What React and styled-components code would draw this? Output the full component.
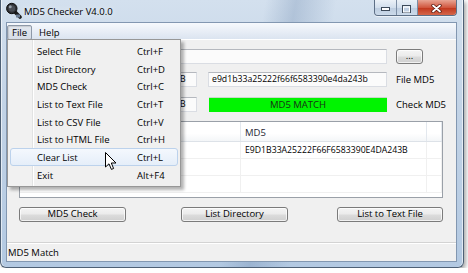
import React from 'react'
import styled, { createGlobalStyle } from 'styled-components'

const FONT = `"Segoe UI", "Open Sans", "Liberation Sans", sans-serif`;

const GlobalStyle = createGlobalStyle`
   html, body{
      margin: 0;
      padding: 0;
      background: #fff;
   }
   body{
      font-family: ${FONT};
      font-size: 9.5px;
      color: #000;
   }
`;

const Window = styled.div`
   position: relative;
   width: 464px;
   height: 268px;
   box-sizing: border-box;
   display: flex;
   flex-direction: column;
   padding: 0 6px 5px 5px;
   border: 1px solid #4e6075;
   border-top: none;
   border-radius: 0 0 6px 6px;
   background:
      linear-gradient(100deg, transparent 52%, rgba(95,125,165,0.28) 58%, transparent 66%),
      linear-gradient(to bottom, #d3e0ee 0%, #c2d3e6 40%, #b3c9e2 100%);
   box-shadow: 2px 2px 4px rgba(0,0,0,0.35), inset 1px 0 0 rgba(255,255,255,0.6), inset -1px 0 0 rgba(255,255,255,0.6);
`;

const TitleBar = styled.div`
   height: 22px;
   display: flex;
   align-items: flex-start;

   svg{
      margin: 2px 0 0 -1px;
      flex: none;
   }
`;

const Title = styled.div`
   margin: 5px 0 0 2px;
   font-size: 9.5px;
   line-height: 13px;
   color: #000;
   text-shadow: 0 0 6px rgba(255,255,255,0.9);
`;

const Controls = styled.div`
   margin-left: auto;
   display: flex;
   height: 15px;
   border: 1px solid #5d6f86;
   border-top: none;
   border-radius: 0 0 4px 4px;
   overflow: hidden;
   box-shadow: 0 1px 0 rgba(255,255,255,0.6);
`;

const CtrlButton = styled.div`
   width: ${p => p.$w}px;
   display: flex;
   align-items: center;
   justify-content: center;
   border-left: ${p => p.$first ? 'none' : '1px solid #7c8ea5'};
   background: ${p => p.$close
      ? 'linear-gradient(to bottom, #e8a493 0%, #d1573f 50%, #c2391f 55%, #d4664a 100%)'
      : 'linear-gradient(to bottom, rgba(255,255,255,0.55) 0%, rgba(210,222,236,0.5) 50%, rgba(170,188,212,0.5) 55%, rgba(200,215,232,0.6) 100%)'};
`;

const Client = styled.div`
   flex: 1;
   display: flex;
   flex-direction: column;
   border: 1px solid #8297b1;
   background: #f0f0f0;
   min-height: 0;
`;

const MenuBar = styled.div`
   height: 16px;
   display: flex;
   align-items: flex-start;
   border-bottom: 1px solid #fff;
   background: linear-gradient(to bottom, #f6f9fd 0%, #e6ecf5 60%, #dbe4f0 100%);
`;

const MenuTitle = styled.div`
   height: 13px;
   margin-top: 2px;
   margin-left: ${p => p.$ml || 0}px;
   padding: 0 4px;
   line-height: 13px;
   border: 1px solid ${p => p.$open ? '#8e99a8' : 'transparent'};
   border-radius: 2px;
   background: ${p => p.$open ? 'linear-gradient(to bottom, #e3e8ef, #d6dde7)' : 'transparent'};
   box-shadow: ${p => p.$open ? 'inset 1px 1px 1px rgba(0,0,0,0.12)' : 'none'};
`;

const Body = styled.div`
   flex: 1;
   display: flex;
   flex-direction: column;
   padding: 9px 0 0 12px;
`;

const Row = styled.div`
   display: flex;
   align-items: center;
   height: 15px;
   margin-top: ${p => p.$mt || 0}px;
`;

const TextBox = styled.div`
   width: ${p => p.$w}px;
   height: 15px;
   box-sizing: border-box;
   margin-left: ${p => p.$ml || 0}px;
   padding: 0 ${p => p.$right ? 12 : 3}px 0 3px;
   border: 1px solid #dadde3;
   border-top-color: #b5b8be;
   background: #fbfbfb;
   font-size: ${p => p.$hash ? 8.7 : 9.5}px;
   line-height: 13px;
   white-space: nowrap;
   overflow: hidden;
   text-align: ${p => p.$right ? 'right' : 'left'};
`;

const MatchBar = styled.div`
   width: 178px;
   height: 14px;
   margin-left: 12px;
   background: #00f400;
   border-top: 1px solid #c9d8c9;
   color: #163016;
   text-align: center;
   line-height: 13px;
`;

const FieldLabel = styled.div`
   margin-left: ${p => p.$ml}px;
   white-space: nowrap;
`;

const WinButton = styled.div`
   width: ${p => p.$w}px;
   height: 15px;
   box-sizing: border-box;
   margin-left: ${p => p.$ml || 0}px;
   border: 1px solid #7b7b7b;
   border-radius: 3px;
   background: linear-gradient(to bottom, #f4f4f4 0%, #ebebeb 48%, #dcdcdc 52%, #cfcfcf 100%);
   box-shadow: inset 0 0 0 1px rgba(255,255,255,0.7);
   text-align: center;
   line-height: 12px;
   white-space: nowrap;
`;

const ListView = styled.div`
   width: 424px;
   height: 77px;
   margin-top: 9px;
   box-sizing: border-box;
   border: 1px solid #9aa0a8;
   background: #fff;
   display: flex;
   flex-direction: column;
   overflow: hidden;
`;

const ListRow = styled.div`
   display: grid;
   grid-template-columns: 221px 186px 1fr;
   height: ${p => p.$head ? 19 : 16}px;
   flex: none;
   border-bottom: 1px solid ${p => p.$head ? '#dde2e8' : '#f0f0f0'};
   background: ${p => p.$head ? 'linear-gradient(to bottom, #fff 0%, #fff 60%, #f4f6f8 100%)' : '#fff'};
`;

const Cell = styled.div`
   padding-left: 4px;
   line-height: ${p => p.$head ? 21 : 16}px;
   border-right: 1px solid ${p => p.$head ? '#e3e8ee' : '#f0f0f0'};
   white-space: nowrap;
   overflow: hidden;
   font-size: ${p => p.$hash ? 8.7 : 9.5}px;
   color: ${p => p.$head ? '#1e2733' : '#000'};
`;

const Actions = styled.div`
   display: flex;
   margin-top: 9px;
`;

const StatusBar = styled.div`
   height: 18px;
   border-top: 1px solid #d3d3d3;
   padding-left: 1px;
   line-height: 20px;
   background: #f0f0f0;
   box-shadow: inset 0 1px 0 #fff;
`;

const DropMenu = styled.div`
   position: absolute;
   left: 6px;
   top: 39px;
   width: 174px;
   box-sizing: border-box;
   padding: 2px;
   border: 1px solid #979797;
   background: linear-gradient(to right, #f1f1f1 0, #f1f1f1 24px, #e2e3e3 24px, #e2e3e3 25px, #fff 25px, #fff 26px, #f0f0f0 26px);
   box-shadow: 3px 3px 3px rgba(0,0,0,0.3);
`;

const MenuItem = styled.div`
   display: grid;
   grid-template-columns: 100px auto;
   height: 17.7px;
   box-sizing: border-box;
   padding-left: 26px;
   line-height: 17px;
   border: 1px solid ${p => p.$hot ? '#bcd2ec' : 'transparent'};
   border-radius: 3px;
   background: ${p => p.$hot ? 'linear-gradient(to bottom, #f4f8fd, #e5eef9)' : 'transparent'};
   white-space: nowrap;
`;

const Pointer = styled.svg`
   position: absolute;
   left: 103.5px;
   top: 151.5px;
`;

const AppIcon = () => (
   <svg width="17" height="17" viewBox="0 0 17 17">
      <line x1="10" y1="10" x2="15" y2="15" stroke="#1b1b1b" strokeWidth="3.6" strokeLinecap="round" />
      <circle cx="6.8" cy="6.5" r="5.2" fill="#2d2f33" stroke="#0c0c0c" strokeWidth="1" />
      <circle cx="6.8" cy="6.5" r="3.3" fill="#4a4e55" />
      <circle cx="5.2" cy="4.8" r="1.5" fill="#9aa3ad" />
      <rect x="11" y="12.5" width="4" height="3" rx="0.6" fill="#6d7f96" />
   </svg>
);

const menuItems = [
   ['Select File', 'Ctrl+F'],
   ['List Directory', 'Ctrl+D'],
   ['MD5 Check', 'Ctrl+C'],
   ['List to Text File', 'Ctrl+T'],
   ['List to CSV File', 'Ctrl+V'],
   ['List to HTML File', 'Ctrl+H'],
   ['Clear List', 'Ctrl+L'],
   ['Exit', 'Alt+F4'],
];

const HASH = 'E9D1B33A25222F66F6583390E4DA243B';

const App = () => {
   return (
      <>
         <GlobalStyle />
         <Window>
            <TitleBar>
               <AppIcon />
               <Title>MD5 Checker V4.0.0</Title>
               <Controls>
                  <CtrlButton $w={21} $first>
                     <svg width="9" height="4" viewBox="0 0 9 4">
                        <rect x="0.5" y="0.5" width="8" height="3" fill="#fff" stroke="#3d4a5a" strokeWidth="1" />
                     </svg>
                  </CtrlButton>
                  <CtrlButton $w={20}>
                     <svg width="9" height="8" viewBox="0 0 9 8">
                        <rect x="0.5" y="0.5" width="8" height="7" fill="none" stroke="#3d4a5a" strokeWidth="1" />
                        <rect x="1.5" y="2" width="6" height="5" fill="none" stroke="#fff" strokeWidth="1" />
                     </svg>
                  </CtrlButton>
                  <CtrlButton $w={38} $close>
                     <svg width="11" height="9" viewBox="0 0 11 9">
                        <path d="M2 1.5 L9 7.5 M9 1.5 L2 7.5" stroke="#5a1a10" strokeWidth="3.4" strokeLinecap="round" />
                        <path d="M2 1.5 L9 7.5 M9 1.5 L2 7.5" stroke="#fff" strokeWidth="1.8" strokeLinecap="round" />
                     </svg>
                  </CtrlButton>
               </Controls>
            </TitleBar>
            <Client>
               <MenuBar>
                  <MenuTitle $open>File</MenuTitle>
                  <MenuTitle $ml={2}>Help</MenuTitle>
               </MenuBar>
               <Body>
                  <Row>
                     <TextBox $w={368}>C:\setup.exe</TextBox>
                     <WinButton $w={27} $ml={9}>...</WinButton>
                  </Row>
                  <Row $mt={8}>
                     <TextBox $w={178} $right $hash>{HASH}</TextBox>
                     <TextBox $w={179} $ml={11} $hash>{HASH.toLowerCase()}</TextBox>
                     <FieldLabel $ml={9}>File MD5</FieldLabel>
                  </Row>
                  <Row $mt={10}>
                     <TextBox $w={178} $right $hash>{HASH}</TextBox>
                     <MatchBar>MD5 MATCH</MatchBar>
                     <FieldLabel $ml={9}>Check MD5</FieldLabel>
                  </Row>
                  <ListView>
                     <ListRow $head>
                        <Cell $head>File</Cell>
                        <Cell $head>MD5</Cell>
                        <Cell $head />
                     </ListRow>
                     <ListRow>
                        <Cell>setup.exe</Cell>
                        <Cell $hash>{HASH}</Cell>
                        <Cell />
                     </ListRow>
                     <ListRow>
                        <Cell /><Cell /><Cell />
                     </ListRow>
                     <ListRow>
                        <Cell /><Cell /><Cell />
                     </ListRow>
                  </ListView>
                  <Actions>
                     <WinButton $w={107}>MD5 Check</WinButton>
                     <WinButton $w={107} $ml={55}>List Directory</WinButton>
                     <WinButton $w={106} $ml={49}>List to Text File</WinButton>
                  </Actions>
               </Body>
               <StatusBar>MD5 Match</StatusBar>
            </Client>

            <DropMenu>
               {menuItems.map(([label, key]) => (
                  <MenuItem key={label} $hot={label === 'Clear List'}>
                     <span>{label}</span>
                     <span>{key}</span>
                  </MenuItem>
               ))}
            </DropMenu>

            <Pointer width="12" height="19" viewBox="0 0 12 19">
               <path d="M0.5 0.5 L0.5 15 L4 11.8 L6.4 17.4 L8.6 16.5 L6.3 11 L11 11 Z" fill="#fff" stroke="#000" strokeWidth="1" strokeLinejoin="round" />
            </Pointer>
         </Window>
      </>
   )
}

export default App
